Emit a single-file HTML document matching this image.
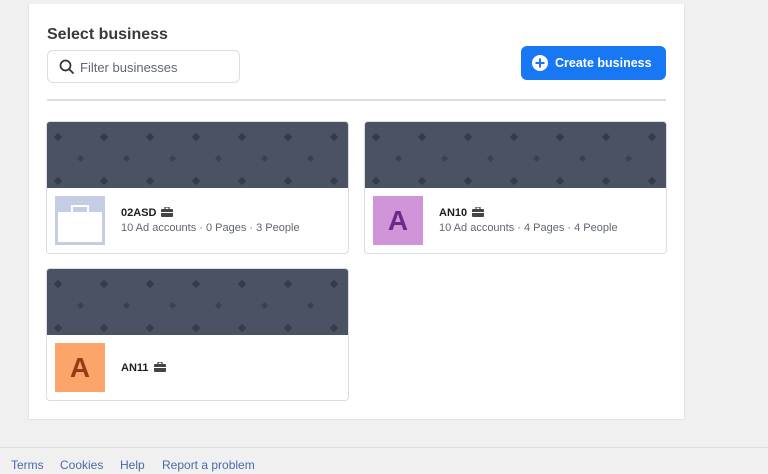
<!DOCTYPE html>
<html><head><meta charset="utf-8"><style>
*{box-sizing:border-box;margin:0;padding:0}
body{width:768px;height:474px;background:#f0f0f0;font-family:"Liberation Sans",Arial,sans-serif;position:relative;overflow:hidden}
.panel{position:absolute;left:28px;top:4px;width:657px;height:416px;background:#fff;border:1px solid #e3e3e3;border-top:none}
h1{position:absolute;left:47px;top:26px;font-size:16px;font-weight:bold;color:#3a3a3a}
.search{position:absolute;left:47px;top:50px;width:193px;height:33px;border:1px solid #dadde1;border-radius:6px;background:#fff}
.search span{position:absolute;left:32px;top:9px;font-size:13px;color:#606770}
.btn{position:absolute;left:521px;top:46px;width:145px;height:34px;background:#1877f2;border-radius:6px;color:#fff;font-weight:bold;font-size:12.5px}
.btn span{position:absolute;left:34px;top:10px}
.div{position:absolute;left:47px;top:99px;width:619px;height:2px;background:#dadde1}
.card{position:absolute;width:303px;height:133px;border:1px solid #dadde1;border-radius:4px;background:#fff;overflow:hidden}
.ban{position:absolute;left:0;top:0;width:100%;height:66px;background:#4b5263}
.av{position:absolute;left:8px;top:74px;width:50px;height:49px;font-size:28px;font-weight:bold;text-align:center;line-height:49px}
.name{position:absolute;left:74px;top:85px;font-size:11px;font-weight:bold;color:#1c1e21}
.stats{position:absolute;left:74px;top:100px;font-size:11px;color:#606770}
.bc{display:inline-block;vertical-align:-1px;margin-left:5px}
.foot{position:absolute;left:0;top:447px;width:768px;height:1px;background:#dadde1}
.links{position:absolute;top:458px;font-size:12px;color:#4b6aa8}
</style></head><body>
<svg width="0" height="0" style="position:absolute"><defs>
<pattern id="p" width="46" height="44" patternUnits="userSpaceOnUse" x="0" y="0">
<rect x="8" y="12" width="6" height="6" transform="rotate(45 11 15)" fill="#353b48"/>
<rect x="31" y="34" width="5" height="5" transform="rotate(45 33.5 36.5)" fill="#3a404d"/>
</pattern>
<symbol id="bc" viewBox="0 0 12 10"><rect x="0" y="2" width="12" height="8" rx="1" fill="#444"/><rect x="4" y="0" width="4" height="3" fill="none" stroke="#444" stroke-width="1.2"/><rect x="0" y="5" width="12" height="1" fill="#fff"/></symbol>
</defs></svg>
<div class="panel"></div>
<h1>Select business</h1>
<div class="search"><svg style="position:absolute;left:11px;top:8px" width="16" height="16" viewBox="0 0 16 16"><circle cx="6.5" cy="6.5" r="5" fill="none" stroke="#333" stroke-width="1.7"/><line x1="10" y1="10" x2="14.5" y2="14.5" stroke="#333" stroke-width="1.8"/></svg><span>Filter businesses</span></div>
<div class="btn"><svg style="position:absolute;left:11px;top:9px" width="16" height="16" viewBox="0 0 16 16"><circle cx="8" cy="8" r="8" fill="#fff"/><rect x="3.5" y="7" width="9" height="2" fill="#1877f2"/><rect x="7" y="3.5" width="2" height="9" fill="#1877f2"/></svg><span>Create business</span></div>
<div class="div"></div>

<div class="card" style="left:46px;top:121px"><svg class="ban" width="303" height="66"><rect width="303" height="66" fill="#4b5263"/><rect width="303" height="66" fill="url(#p)"/></svg>
<div class="av" style="background:#c5cde4"><svg width="50" height="49" viewBox="0 0 50 49"><rect x="3" y="16" width="44" height="30" fill="#fff"/><rect x="17" y="10" width="16" height="7" fill="none" stroke="#fff" stroke-width="2"/></svg></div>
<div class="name">02ASD<svg class="bc" width="12" height="10"><use href="#bc"/></svg></div>
<div class="stats">10 Ad accounts · 0 Pages · 3 People</div></div>

<div class="card" style="left:364px;top:121px"><svg class="ban" width="303" height="66"><rect width="303" height="66" fill="#4b5263"/><rect width="303" height="66" fill="url(#p)"/></svg>
<div class="av" style="background:#d095d8;color:#6b2a86">A</div>
<div class="name">AN10<svg class="bc" width="12" height="10"><use href="#bc"/></svg></div>
<div class="stats">10 Ad accounts · 4 Pages · 4 People</div></div>

<div class="card" style="left:46px;top:268px"><svg class="ban" width="303" height="66"><rect width="303" height="66" fill="#4b5263"/><rect width="303" height="66" fill="url(#p)"/></svg>
<div class="av" style="background:#fba56b;color:#9a3a12">A</div>
<div class="name" style="top:93px">AN11<svg class="bc" width="12" height="10"><use href="#bc"/></svg></div></div>

<div class="foot"></div>
<span class="links" style="left:11px">Terms</span>
<span class="links" style="left:60px">Cookies</span>
<span class="links" style="left:120px">Help</span>
<span class="links" style="left:162px">Report a problem</span>
</body></html>
